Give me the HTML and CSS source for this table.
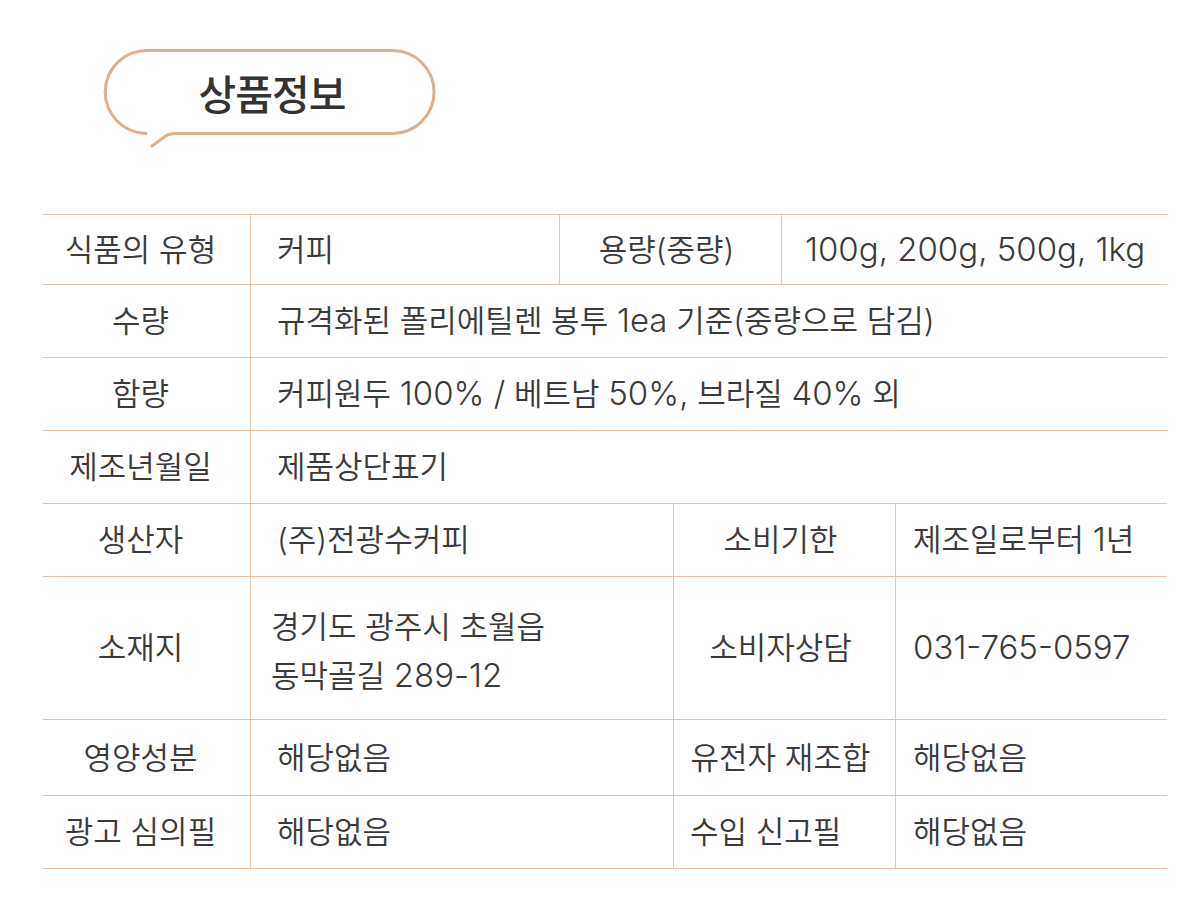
FILE: index.html
```html
<!DOCTYPE html>
<html lang="ko">
<head>
<meta charset="utf-8">
<title>상품정보</title>
<link rel="stylesheet" href="styles.css">
</head>
<body>
<div class="page">
  <div class="bubble">
    <svg class="bubble-shape" viewBox="100 44 340 110" width="340" height="110" aria-hidden="true">
      <path d="M152 146 L165 136.5 Q169 133.5 176 133.5 L392.5 133.5 A41.5 41.5 0 0 0 392.5 50.5 L147.5 50.5 A41.5 41.5 0 0 0 146 133.5" fill="none" stroke="#dcb08e" stroke-width="3" stroke-linecap="round"/>
    </svg>
    <h1 class="bubble-title">상품정보</h1>
  </div>

  <div class="info">
    <div class="row row-4a h70">
      <div class="cell head">식품의 유형</div>
      <div class="cell val">커피</div>
      <div class="cell sub">용량(중량)</div>
      <div class="cell val v-wide"><span class="lat">100g, 200g, 500g, 1kg</span></div>
    </div>
    <div class="row row-2">
      <div class="cell head">수량</div>
      <div class="cell val">규격화된 폴리에틸렌 봉투 <span class="lat">1ea</span> 기준(중량으로 담김)</div>
    </div>
    <div class="row row-2">
      <div class="cell head">함량</div>
      <div class="cell val">커피원두 <span class="lat">100% /</span> 베트남 <span class="lat">50%,</span> 브라질 <span class="lat">40%</span> 외</div>
    </div>
    <div class="row row-2">
      <div class="cell head">제조년월일</div>
      <div class="cell val">제품상단표기</div>
    </div>
    <div class="row row-4b">
      <div class="cell head">생산자</div>
      <div class="cell val">(주)전광수커피</div>
      <div class="cell sub">소비기한</div>
      <div class="cell val v-last">제조일로부터 <span class="lat">1</span>년</div>
    </div>
    <div class="row row-4b h143">
      <div class="cell head">소재지</div>
      <div class="cell val addr"><div class="addr-text">경기도 광주시 초월읍<br>동막골길 <span class="lat">289-12</span></div></div>
      <div class="cell sub">소비자상담</div>
      <div class="cell val v-last"><span class="lat">031-765-0597</span></div>
    </div>
    <div class="row row-4b h76">
      <div class="cell head">영양성분</div>
      <div class="cell val">해당없음</div>
      <div class="cell sub">유전자 재조합</div>
      <div class="cell val v-last">해당없음</div>
    </div>
    <div class="row row-4b">
      <div class="cell head">광고 심의필</div>
      <div class="cell val">해당없음</div>
      <div class="cell sub sub-left">수입 신고필</div>
      <div class="cell val v-last">해당없음</div>
    </div>
  </div>
</div>
</body>
</html>
```
FILE: styles.css
```css
html, body {
  margin: 0;
  padding: 0;
  background: #ffffff;
}

body {
  font-family: "Inter", "Noto Sans CJK KR", sans-serif;
  color: #3a3a3a;
}

.page {
  width: 1124px;
  padding: 44px 0 0 43px;
}

.bubble {
  position: relative;
  width: 340px;
  height: 110px;
  margin-left: 57px;
}

.bubble-shape {
  position: absolute;
  left: 0;
  top: 0;
  display: block;
}

.bubble-title {
  position: relative;
  margin: 0;
  width: 344px;
  height: 96px;
  display: flex;
  align-items: center;
  justify-content: center;
  font-family: "Noto Sans CJK KR", sans-serif;
  font-size: 41px;
  font-weight: 500;
  color: #333333;
  letter-spacing: -1px;
}

.info {
  margin-top: 60px;
  border-top: 1px solid #e9c3a3;
}

.row {
  display: grid;
  min-height: 72px;
  border-bottom: 1px solid #e9c3a3;
  font-size: 31px;
  font-weight: 350;
}

.row-4a { grid-template-columns: 207px 309px 222px 1fr; }
.row-2  { grid-template-columns: 207px 1fr; }
.row-4b { grid-template-columns: 207px 423px 222px 1fr; }

.h70 { min-height: 69px; }
.h143 { min-height: 142px; }
.h76 { min-height: 75px; }

.cell {
  display: flex;
  align-items: center;
  border-left: 1px solid #e6c8b0;
  line-height: 1.2;
  white-space: pre;
}

.cell:first-child { border-left: none; }

.lat {
  font-size: 33px;
}

.head {
  justify-content: center;
  padding-right: 12px;
}

.sub {
  justify-content: center;
  padding-right: 8px;
}

.sub-left {
  justify-content: flex-start;
  padding-left: 16px;
}

.val {
  padding-left: 26px;
}

.v-wide { padding-left: 23px; }
.v-last { padding-left: 17px; }

.addr {
  padding-left: 20px;
}

.addr-text {
  line-height: 49px;
  padding-top: 6px;
  white-space: nowrap;
}
```
